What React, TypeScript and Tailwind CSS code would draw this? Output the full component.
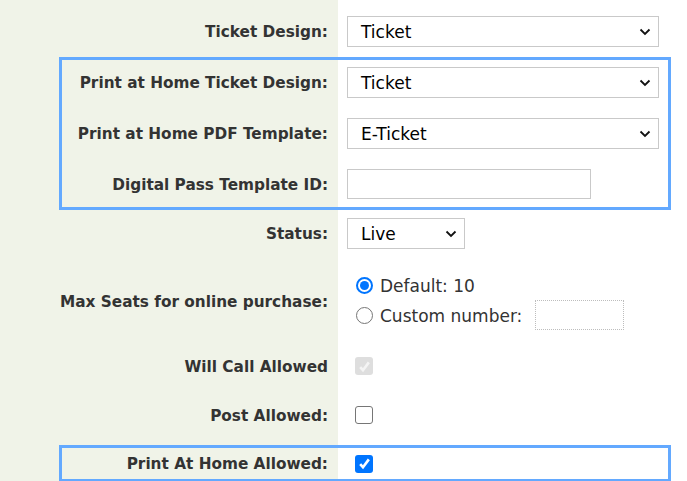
import React from 'react';

const labelFont = { fontFamily: '"DejaVu Sans", Verdana, sans-serif' };

const Chevron = () => (
  <svg width="12" height="8" viewBox="0 0 12 8" className="shrink-0">
    <path d="M1.5 1.5 L6 6 L10.5 1.5" fill="none" stroke="#111" strokeWidth="1.8" />
  </svg>
);

const Select = ({ value, width }: { value: string; width: string }) => (
  <div className={`${width} h-[31px] border border-[#c9c9c9] bg-white flex items-center justify-between pl-[13px] pr-[7px] text-[17px] text-black`}>
    <span className="pt-[2px]">{value}</span>
    <Chevron />
  </div>
);

const Check = ({ variant }: { variant: 'disabled' | 'empty' | 'checked' }) => {
  if (variant === 'empty') {
    return <div className="ml-[8px] w-[18px] h-[18px] rounded-[3px] border-[1.5px] border-[#767676] bg-white" />;
  }
  const bg = variant === 'checked' ? 'bg-[#0075ff]' : 'bg-[#dedede]';
  const stroke = variant === 'checked' ? '#ffffff' : '#f4f4f4';
  return (
    <div className={`ml-[8px] w-[18px] h-[18px] rounded-[3px] ${bg} flex items-center justify-center`}>
      <svg width="13" height="13" viewBox="0 0 12 12">
        <path d="M2 6.5 L4.6 9.4 L10 2.2" fill="none" stroke={stroke} strokeWidth="2.4" />
      </svg>
    </div>
  );
};

const Row = ({ label, inBox, children, className = '' }: { label: string; inBox?: boolean; children: React.ReactNode; className?: string }) => (
  <div className={`flex items-center ${className}`}>
    <div
      className={`${inBox ? 'w-[276px]' : 'w-[338px]'} shrink-0 pr-[10px] pt-[2px] text-right font-bold text-[15.3px] text-[#333]`}
      style={labelFont}
    >
      {label}
    </div>
    <div className="pl-[9px] flex items-center">{children}</div>
  </div>
);

export default function App() {
  return (
    <div
      className="min-h-screen w-full pt-[16px] bg-[linear-gradient(to_right,#f0f3e8_338px,#ffffff_338px)]"
      style={{ fontFamily: '"DejaVu Sans", Verdana, sans-serif' }}
    >
      <Row label="Ticket Design:" className="h-[31px]">
        <Select value="Ticket" width="w-[312px]" />
      </Row>

      <div className="ml-[59px] w-[612px] mt-[10px] border-[3px] border-[#63a9ff] pt-[7px] pb-[8px] flex flex-col gap-[20px]">
        <Row label="Print at Home Ticket Design:" inBox className="h-[31px]">
          <Select value="Ticket" width="w-[312px]" />
        </Row>
        <Row label="Print at Home PDF Template:" inBox className="h-[31px]">
          <Select value="E-Ticket" width="w-[312px]" />
        </Row>
        <Row label="Digital Pass Template ID:" inBox className="h-[30px]">
          <div className="w-[244px] h-[30px] border border-[#c9c9c9] bg-white" />
        </Row>
      </div>

      <Row label="Status:" className="h-[31px] mt-[8px]">
        <Select value="Live" width="w-[118px]" />
      </Row>

      <Row label="Max Seats for online purchase:" className="mt-[22px]">
        <div className="flex flex-col text-[17px] text-[#333] pl-[9px]">
          <div className="h-[28px] flex items-center gap-[7px]">
            <div className="w-[17px] h-[17px] rounded-full border-[2px] border-[#0075ff] flex items-center justify-center">
              <div className="w-[9px] h-[9px] rounded-full bg-[#0075ff]" />
            </div>
            <span className="pt-[3px]">Default: 10</span>
          </div>
          <div className="h-[32px] flex items-center gap-[7px]">
            <div className="w-[17px] h-[17px] rounded-full border-[1.5px] border-[#767676] bg-white" />
            <span className="pt-[3px]">Custom number:</span>
            <div className="w-[89px] h-[30px] border border-dotted border-[#bdbdbd] bg-white ml-[6px]" />
          </div>
        </div>
      </Row>

      <Row label="Will Call Allowed" className="h-[30px] mt-[20px]">
        <Check variant="disabled" />
      </Row>

      <Row label="Post Allowed:" className="h-[30px] mt-[19px]">
        <Check variant="empty" />
      </Row>

      <div className="ml-[59px] w-[612px] mt-[15px] border-[3px] border-[#63a9ff] h-[37px] flex items-center">
        <Row label="Print At Home Allowed:" inBox className="h-[31px]">
          <Check variant="checked" />
        </Row>
      </div>
    </div>
  );
}
